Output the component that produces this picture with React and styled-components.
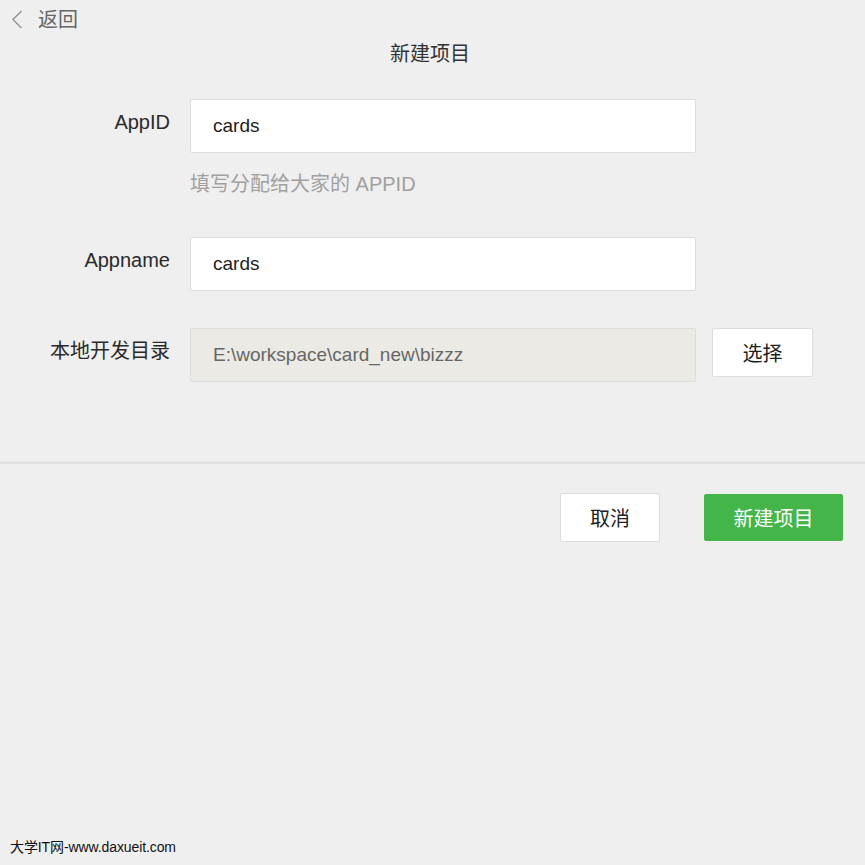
import React from "react";
import styled, { createGlobalStyle } from "styled-components";

const GlobalStyle = createGlobalStyle`
  html, body {
    margin: 0;
    padding: 0;
    background: #efefef;
  }
  body {
    font-family: "Liberation Sans", "Noto Sans CJK SC", sans-serif;
    color: #333;
  }
`;

const Page = styled.div`
  position: relative;
  min-height: 865px;
  background: #efefef;
`;

const TopBar = styled.div`
  height: 39px;
  display: flex;
  align-items: center;
  padding-left: 11px;
`;

const BackLink = styled.a`
  display: flex;
  align-items: center;
  gap: 15px;
  font-size: 20px;
  line-height: 24px;
  color: #666;
  text-decoration: none;
  cursor: pointer;
`;

const Title = styled.h1`
  margin: 0;
  padding: 1px 5px 0 0;
  font-size: 20px;
  font-weight: normal;
  line-height: 28px;
  text-align: center;
  color: #333;
`;

const Form = styled.div`
  margin-top: 31px;
  display: flex;
  flex-direction: column;
  gap: 37px;
`;

const FieldRow = styled.div`
  display: grid;
  grid-template-columns: 170px 506px auto;
  column-gap: 20px;
  align-items: start;
`;

const Label = styled.label`
  padding-top: 11px;
  text-align: right;
  font-size: 20px;
  line-height: 24px;
  color: #2a2a2a;
  white-space: nowrap;
`;

const FieldCol = styled.div`
  display: flex;
  flex-direction: column;
`;

const Input = styled.div`
  box-sizing: border-box;
  height: 54px;
  display: flex;
  align-items: center;
  padding: 0 22px;
  border: 1px solid #dcdcdc;
  border-radius: 2px;
  background: ${(p) => (p.$disabled ? "#ebeae5" : "#fff")};
  color: ${(p) => (p.$disabled ? "#666" : "#222")};
  font-size: 19px;
`;

const Hint = styled.div`
  margin: 17px 0 2px;
  font-size: 20px;
  line-height: 28px;
  color: #a0a0a0;
`;

const Button = styled.button`
  box-sizing: border-box;
  width: ${(p) => p.$w}px;
  height: ${(p) => p.$h}px;
  border-radius: 2px;
  font-family: "Liberation Sans", "Noto Sans CJK SC", sans-serif;
  font-size: 20px;
  cursor: pointer;
  border: 1px solid ${(p) => (p.$primary ? "#44b549" : "#dcdcdc")};
  background: ${(p) => (p.$primary ? "#44b549" : "#fff")};
  color: ${(p) => (p.$primary ? "#fff" : "#222")};
  padding: 0;
`;

const SideButton = styled(Button)`
  margin-left: -4px;
`;

const Divider = styled.div`
  margin-top: 79px;
  height: 2px;
  background: #dddddd;
  border-top: 1px solid #e8e8e8;
`;

const Footer = styled.div`
  display: flex;
  justify-content: flex-end;
  align-items: center;
  gap: 44px;
  padding: 29px 22px 0 0;
`;

const Watermark = styled.div`
  position: absolute;
  left: 10px;
  top: 838px;
  font-size: 14px;
  line-height: 18px;
  letter-spacing: -0.1px;
  color: #111;
  font-family: "Liberation Sans", "Noto Sans CJK SC", sans-serif;
`;

const Chevron = () => (
  <svg width="12" height="19" viewBox="0 0 12 19" fill="none">
    <path d="M10.5 1 L2 9.5 L10.5 18" stroke="#999" strokeWidth="1.6" />
  </svg>
);

export default function App() {
  return (
    <Page>
      <GlobalStyle />
      <TopBar>
        <BackLink>
          <Chevron />
          返回
        </BackLink>
      </TopBar>
      <Title>新建项目</Title>
      <Form>
        <FieldRow>
          <Label>AppID</Label>
          <FieldCol>
            <Input>cards</Input>
            <Hint>填写分配给大家的 APPID</Hint>
          </FieldCol>
        </FieldRow>
        <FieldRow>
          <Label>Appname</Label>
          <FieldCol>
            <Input>cards</Input>
          </FieldCol>
        </FieldRow>
        <FieldRow>
          <Label>本地开发目录</Label>
          <FieldCol>
            <Input $disabled>E:\workspace\card_new\bizzz</Input>
          </FieldCol>
          <SideButton $w={101} $h={49}>选择</SideButton>
        </FieldRow>
      </Form>
      <Divider />
      <Footer>
        <Button $w={100} $h={49}>取消</Button>
        <Button $primary $w={139} $h={47}>新建项目</Button>
      </Footer>
      <Watermark>大学IT网-www.daxueit.com</Watermark>
    </Page>
  );
}
